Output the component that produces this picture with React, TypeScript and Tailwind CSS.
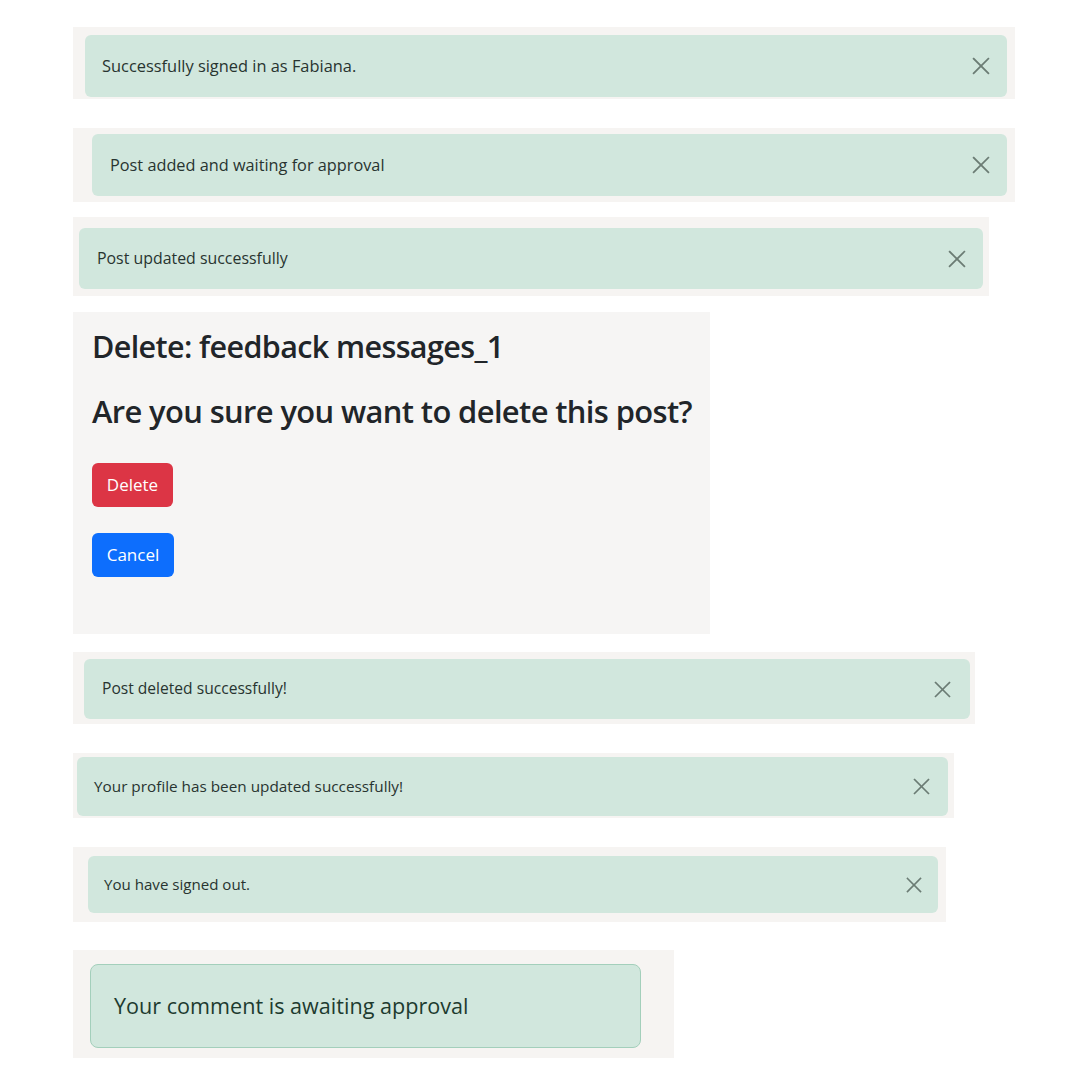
import React from "react";

const XIcon = ({ size }: { size: number }) => (
  <svg width={size} height={size} viewBox="0 0 16 16" fill="none" stroke="#6b7c74" strokeWidth={1.6} strokeLinecap="square">
    <line x1="1.5" y1="1.5" x2="14.5" y2="14.5" />
    <line x1="14.5" y1="1.5" x2="1.5" y2="14.5" />
  </svg>
);

const font = { fontFamily: '"Open Sans", "Noto Sans", sans-serif' };

export default function App() {
  return (
    <div className="w-[1080px] h-[1080px] bg-white overflow-hidden pl-[73px] pt-[27px] flex flex-col items-start" style={font}>
      {/* 1 */}
      <div className="w-[942px] h-[72px] bg-[#f6f4f2] pl-[12px] pr-[8px] pt-[8px]">
        <div className="h-[62px] bg-[#d1e7dd] rounded-[6px] flex items-center justify-between pl-[17px] pr-[17px]">
          <span className="text-[16.4px] text-[#283430]">Successfully signed in as Fabiana.</span>
          <XIcon size={18} />
        </div>
      </div>
      {/* 2 */}
      <div className="mt-[29px] w-[942px] h-[74px] bg-[#f6f4f2] pl-[19px] pr-[8px] pt-[6px]">
        <div className="h-[62px] bg-[#d1e7dd] rounded-[6px] flex items-center justify-between pl-[18px] pr-[17px]">
          <span className="text-[16.3px] text-[#283430]">Post added and waiting for approval</span>
          <XIcon size={18} />
        </div>
      </div>
      {/* 3 */}
      <div className="mt-[15px] w-[916px] h-[79px] bg-[#f6f4f2] pl-[6px] pr-[6px] pt-[11px]">
        <div className="h-[61px] bg-[#d1e7dd] rounded-[6px] flex items-center justify-between pl-[18px] pr-[17px]">
          <span className="text-[15.9px] text-[#283430]">Post updated successfully</span>
          <XIcon size={18} />
        </div>
      </div>
      {/* 4 */}
      <div className="mt-[16px] w-[637px] h-[322px] bg-[#f6f5f4] pl-[19px] pt-[16px] flex flex-col items-start text-[#212529]">
        <h3 className="text-[30.5px] leading-[36px] font-semibold tracking-[-0.02em]">Delete: feedback messages_1</h3>
        <h3 className="mt-[29px] text-[30.9px] leading-[36px] font-semibold tracking-[-0.02em]">Are you sure you want to delete this post?</h3>
        <button className="mt-[34px] w-[81px] h-[44px] rounded-[6px] bg-[#dc3545] text-white text-[17px]">Delete</button>
        <button className="mt-[26px] w-[82px] h-[44px] rounded-[6px] bg-[#0d6efd] text-white text-[17px]">Cancel</button>
      </div>
      {/* 6 */}
      <div className="mt-[18px] w-[902px] h-[72px] bg-[#f6f4f2] pl-[11px] pr-[5px] pt-[7px]">
        <div className="h-[60px] bg-[#d1e7dd] rounded-[6px] flex items-center justify-between pl-[18px] pr-[19px]">
          <span className="text-[15.6px] text-[#283430]">Post deleted successfully!</span>
          <XIcon size={17} />
        </div>
      </div>
      {/* 7 */}
      <div className="mt-[29px] w-[881px] h-[65px] bg-[#f6f4f2] pl-[4px] pr-[6px] pt-[4px]">
        <div className="h-[59px] bg-[#d1e7dd] rounded-[6px] flex items-center justify-between pl-[17px] pr-[18px]">
          <span className="text-[15.3px] text-[#283430]">Your profile has been updated successfully!</span>
          <XIcon size={17} />
        </div>
      </div>
      {/* 8 */}
      <div className="mt-[29px] w-[873px] h-[75px] bg-[#f6f4f2] pl-[15px] pr-[8px] pt-[9px]">
        <div className="h-[57px] bg-[#d1e7dd] rounded-[6px] flex items-center justify-between pl-[16px] pr-[16px]">
          <span className="text-[15.1px] text-[#283430]">You have signed out.</span>
          <XIcon size={16} />
        </div>
      </div>
      {/* 9 */}
      <div className="mt-[28px] w-[601px] h-[108px] bg-[#f6f4f2] pl-[17px] pr-[33px] pt-[14px]">
        <div className="h-[84px] bg-[#d1e7dd] border border-[#a3cfbb] rounded-[8px] flex items-center pl-[23px]">
          <span className="text-[21.6px] text-[#1d3b2f]">Your comment is awaiting approval</span>
        </div>
      </div>
    </div>
  );
}
